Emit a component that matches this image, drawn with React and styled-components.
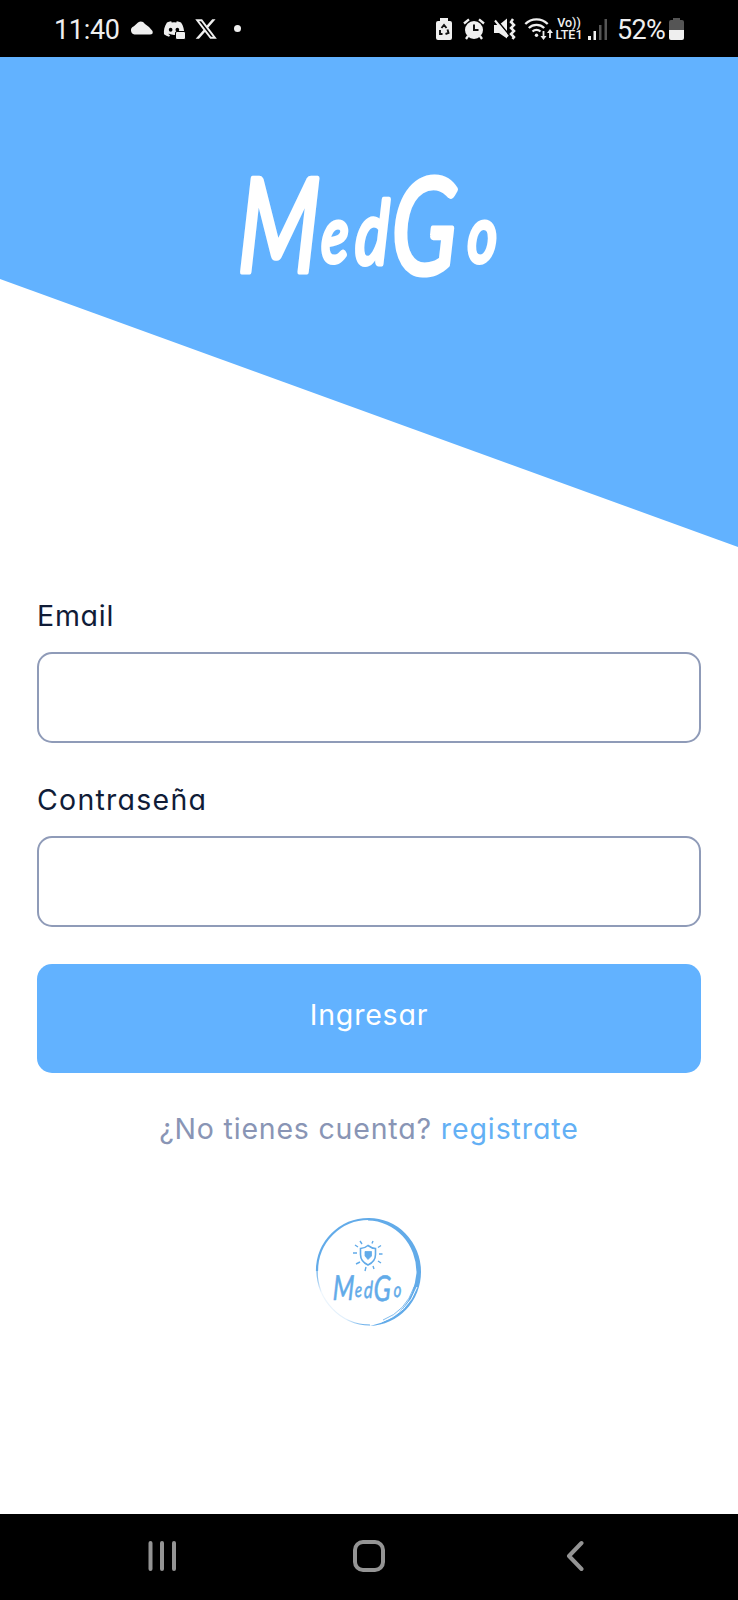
import React from 'react';
import styled, { createGlobalStyle } from 'styled-components';
import { FaXTwitter, FaDiscord } from 'react-icons/fa6';

const BLUE = '#62b2ff';

const GlobalStyle = createGlobalStyle`
  * { box-sizing: border-box; }
  body { margin: 0; background: #fff; }
`;

const Screen = styled.div`
  width: 738px;
  height: 1600px;
  display: flex;
  flex-direction: column;
  background: #fff;
  font-family: Inter, 'Open Sans', sans-serif;
  font-feature-settings: 'cv11', 'ss03';
`;

const StatusBar = styled.header`
  height: 57px;
  flex: none;
  display: flex;
  align-items: center;
  justify-content: space-between;
  padding: 0 54px 0 54px;
  background: #000;
  color: #efefef;
  font-family: Roboto, sans-serif;
  font-feature-settings: normal;
`;

const StatusGroup = styled.div`
  display: flex;
  align-items: center;
  height: 22px;
`;

const StatusText = styled.span`
  font-size: 27px;
  line-height: 22px;
  letter-spacing: ${(p) => p.$tracking || '0'};
  width: ${(p) => p.$width}px;
  white-space: nowrap;
  margin-top: 3px;
  margin-left: ${(p) => p.$gap || 0}px;
`;

const Glyph = styled.svg`
  display: block;
  flex: none;
  width: ${(p) => p.$w}px;
  height: 22px;
  margin-left: ${(p) => p.$gap || 0}px;
  overflow: visible;
`;

const DiscordBadge = styled.span`
  position: relative;
  display: flex;
  margin-left: 10px;
  width: 22px;
`;

const ChatMark = styled.span`
  position: absolute;
  right: -1px;
  bottom: 0;
  width: 11px;
  height: 9px;
  background: #efefef;
  border: 1px solid #000;
  border-radius: 2px;
`;

const XMark = styled(FaXTwitter)`
  margin-left: 9px;
  width: 24px;
  height: 24px;
`;

const Dot = styled.span`
  width: 7px;
  height: 7px;
  border-radius: 50%;
  background: #efefef;
  margin-left: 16px;
`;

const Carrier = styled.span`
  display: flex;
  flex-direction: column;
  align-items: center;
  width: 28px;
  margin-left: 2px;
  font-size: 12.5px;
  line-height: 12px;
  font-weight: 500;
  white-space: nowrap;
`;

const Hero = styled.section`
  height: 490px;
  flex: none;
  display: flex;
  justify-content: center;
  padding-top: 113px;
  background: ${BLUE};
  clip-path: polygon(0 0, 100% 0, 100% 100%, 0 45.3%);
`;

const Wordmark = styled.svg`
  display: block;
  flex: none;
  width: 264px;
  height: 121px;
  color: #fff;
  overflow: visible;
`;

const Letters = styled.text`
  font-family: Lato, sans-serif;
  font-style: italic;
  font-feature-settings: normal;
  fill: currentColor;
  stroke: currentColor;
  stroke-width: ${(p) => p.$weight};
  stroke-linejoin: round;
`;

const Form = styled.form`
  display: flex;
  flex-direction: column;
  padding: 47px 37px 0;
`;

const Field = styled.label`
  display: flex;
  flex-direction: column;
  margin-bottom: ${(p) => p.$after}px;
`;

const FieldName = styled.span`
  height: 42px;
  line-height: 44px;
  margin-bottom: 16px;
  font-size: 28.5px;
  letter-spacing: ${(p) => p.$tracking}px;
  color: #101c37;
`;

const Input = styled.input`
  width: 100%;
  height: 91px;
  border: 2px solid #8f9bb8;
  border-radius: 15px;
  background: #fff;
  padding: 0 24px;
  font: inherit;
  outline: none;
`;

const Submit = styled.button`
  height: 109px;
  border: 0;
  border-radius: 15px;
  background: ${BLUE};
  color: #fff;
  font: inherit;
  font-feature-settings: inherit;
  font-size: 28.5px;
  letter-spacing: 0.8px;
  padding: 0 0 7px;
`;

const SignupRow = styled.p`
  display: flex;
  justify-content: center;
  gap: 9px;
  margin: 35px 0 0;
  font-size: 28.5px;
  line-height: 42px;
  color: #8995b5;
  white-space: nowrap;
`;

const Question = styled.span`
  letter-spacing: 0.8px;
`;

const SignupLink = styled.a`
  color: #63b0f5;
  letter-spacing: 0.9px;
`;

const Seal = styled.svg`
  display: block;
  width: 112px;
  height: 116px;
  margin: 65px auto 0;
  overflow: visible;
  fill: none;
  stroke: #62abe9;
  color: #62abe9;
`;

const NavBar = styled.nav`
  height: 86px;
  flex: none;
  margin-top: auto;
  display: flex;
  align-items: center;
  justify-content: space-between;
  padding: 0 154px 2px 147px;
  background: #000;
`;

const NavIcon = styled.svg`
  display: block;
  width: ${(p) => p.$w}px;
  height: 32px;
  fill: none;
  stroke: #949494;
  stroke-width: 4;
  stroke-linecap: round;
  stroke-linejoin: round;
`;

function MedGoText({ weight }) {
  return (
    <Letters transform="scale(.72 1) skewX(-2)" $weight={weight}>
      <tspan x="4" y="102" fontSize="131">M</tspan>
      <tspan x="120" y="92" fontSize="78">e</tspan>
      <tspan x="167" y="94" fontSize="88">d</tspan>
      <tspan x="217" y="104" fontSize="134">G</tspan>
      <tspan x="323" y="92" fontSize="78">o</tspan>
    </Letters>
  );
}

function StatusLeft() {
  return (
    <StatusGroup>
      <StatusText $width={76} $tracking="-.3px">11:40</StatusText>
      <Glyph $w={23} viewBox="0 0 23 22" fill="#efefef">
        <path d="M4.500 16.500a4.300 4.300 0 0 1-.6-8.300L8 4.500Q12 2 15 6l4 3 3.500 4q1 3.500-2.500 3.500Z" />
      </Glyph>
      <DiscordBadge>
        <FaDiscord size={22} />
        <ChatMark />
      </DiscordBadge>
      <XMark />
      <Dot />
    </StatusGroup>
  );
}

function StatusRight() {
  return (
    <StatusGroup>
      <Glyph $w={16} viewBox="0 0 16 22">
        <path d="M4 3V0h8v3h2q2 0 2 2v15q0 2-2 2H2q-2 0-2-2V5q0-2 2-2Z" fill="#efefef" />
        <path d="m5.5 10 2.5-3 2.5 3M11.5 11.5l1 3.500-3 1M6.500 16H4l0-4" fill="none" stroke="#111" strokeWidth="1.9" />
      </Glyph>
      <Glyph $w={22} $gap={11} viewBox="0 0 22 22">
        <circle cx="11" cy="12" r="9" fill="#efefef" />
        <path d="M1 5.500 6 1.300M21 5.500l-5-4.200M5 18l-2 3M17 18l2 3" stroke="#efefef" strokeWidth="2.300" />
        <path d="M11 6.500V12h4.500" fill="none" stroke="#111" strokeWidth="2" />
      </Glyph>
      <Glyph $w={22} $gap={9} viewBox="0 0 22 22">
        <path d="M0 7h5l8-6.500v20L5 15H0Z" fill="#efefef" />
        <path d="m2 1 12.500 15" stroke="#000" strokeWidth="1.500" />
        <path d="m1 2.500 13 16" stroke="#efefef" strokeWidth="2" />
        <path d="m19 1-2 3 3 3-3 3 3 3-3 3 3 3-1.500 2" fill="none" stroke="#efefef" strokeWidth="2.500" />
      </Glyph>
      <Glyph $w={28} $gap={9} viewBox="0 0 28 22" fill="none" stroke="#efefef" strokeWidth="2.300">
        <path d="M.3 6a16 16 0 0 1 22.400 0M3.800 10a11 11 0 0 1 15.400 0M7.500 13.500a6 6 0 0 1 8 0" />
        <circle cx="11.500" cy="17.200" r="1.700" fill="#efefef" stroke="none" />
        <path d="M18.500 13v7M25 20v-6" strokeWidth="1.800" />
        <path d="M15.500 18h6l-3 4ZM22 15h6l-3-4Z" fill="#efefef" stroke="none" />
      </Glyph>
      <Carrier>
        <span>Vo))</span>
        <span>LTE1</span>
      </Carrier>
      <Glyph $w={19} $gap={5} viewBox="0 0 19 22">
        <path d="M0 18h3v4H0zM5.500 13h2.500v9H5.500z" fill="#efefef" />
        <path d="M11 7h2.500v15H11zM16.500 1h2.500v21h-2.500z" fill="#555" />
      </Glyph>
      <StatusText $width={51} $gap={10} $tracking="-.7px">52%</StatusText>
      <Glyph $w={15} $gap={1} viewBox="0 0 15 22">
        <path d="M4 2V0h7v2h2q2 0 2 2v8H0V4q0-2 2-2Z" fill="#555" />
        <path d="M0 12h15v8q0 2-2 2H2q-2 0-2-2Z" fill="#efefef" />
      </Glyph>
    </StatusGroup>
  );
}

function BrandSeal() {
  return (
    <Seal viewBox="0 0 112 116" aria-label="MedGo">
      <defs>
        <linearGradient id="fade" x1="0" y1="0" x2="1" y2=".9">
          <stop offset="0" stopColor="#62abe9" />
          <stop offset=".25" stopColor="#62abe9" stopOpacity=".1" />
          <stop offset=".75" stopColor="#62abe9" stopOpacity=".2" />
          <stop offset="1" stopColor="#62abe9" />
        </linearGradient>
      </defs>
      <path d="M4 56A51.500 52 0 0 1 56 4" strokeWidth="2.200" />
      <path
        d="M55 3A52 54 0 0 1 108 57A53 54 0 0 1 57 111Q99 102 103.500 58A49 52 0 0 0 55 5.500Z"
        fill="currentColor"
        stroke="none"
      />
      <path d="M104 72Q95 98 68 107" stroke="#fff" strokeWidth="1" />
      <path d="M101 72Q93 96 70 105" strokeWidth=".8" />
      <path d="M4 55A53 55 0 0 0 57 110" strokeWidth="1.200" stroke="url(#fade)" />
      <path d="M55 30.500q4 3 7.500 3v6q0 7-7.500 10.500-7.500-3.500-7.500-10.500v-6q4 0 7.500-3Z" strokeWidth="1.600" />
      <path d="M52 36.500h6.500v4.500L55 44.500 52 41Z" fill="currentColor" strokeWidth=".8" />
      <path d="m59 28.500 1-2.500M49 29l-2-3M65 32.500l3-2M66 39h3.500M65 46l3 2M60 51l1 3M53 52l-1 4M47 47l-4 2M44 38h-4M45 32l-3-2" strokeWidth="1.400" />
      <g transform="translate(19.500 58) scale(.265)">
        <MedGoText weight={2} />
      </g>
    </Seal>
  );
}

export default function App() {
  return (
    <>
      <GlobalStyle />
      <Screen>
        <StatusBar>
          <StatusLeft />
          <StatusRight />
        </StatusBar>
        <Hero>
          <Wordmark viewBox="0 0 264 121" aria-label="MedGo">
            <MedGoText weight={5} />
          </Wordmark>
        </Hero>
        <Form>
          <Field $after={35}>
            <FieldName $tracking={0.75}>Email</FieldName>
            <Input type="email" />
          </Field>
          <Field $after={36.5}>
            <FieldName $tracking={1.25}>Contraseña</FieldName>
            <Input type="password" />
          </Field>
          <Submit type="button">Ingresar</Submit>
          <SignupRow>
            <Question>¿No tienes cuenta?</Question>
            <SignupLink>registrate</SignupLink>
          </SignupRow>
        </Form>
        <BrandSeal />
        <NavBar>
          <NavIcon $w={30} viewBox="0 0 30 32">
            <path d="M3.500 3v26M15 3v26M27 3v26" />
          </NavIcon>
          <NavIcon $w={32} viewBox="0 0 32 32">
            <rect x="2" y="2" width="28" height="28" rx="8" />
          </NavIcon>
          <NavIcon $w={23} viewBox="0 0 23 32">
            <path d="M20.500 3 8 16l12.500 13" />
          </NavIcon>
        </NavBar>
      </Screen>
    </>
  );
}
